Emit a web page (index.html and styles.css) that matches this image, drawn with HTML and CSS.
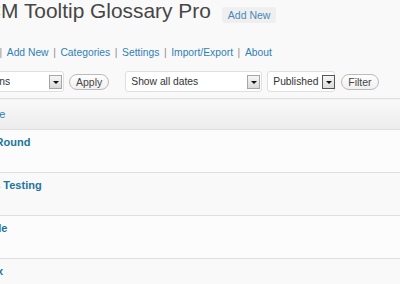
FILE: index.html
```html
<!DOCTYPE html>
<html>
<head>
<meta charset="utf-8">
<link rel="stylesheet" href="styles.css">
</head>
<body>
<div class="wrap">
  <h2 class="page-title"><span>CM Tooltip Glossary Pro</span><a class="add-new" href="#">Add New</a></h2>
  <ul class="subsubsub">
    <li><a href="#">All (4)</a><span class="sep">|</span></li>
    <li><a href="#">Add New</a><span class="sep">|</span></li>
    <li><a href="#">Categories</a><span class="sep">|</span></li>
    <li><a href="#">Settings</a><span class="sep">|</span></li>
    <li><a href="#">Import/Export</a><span class="sep">|</span></li>
    <li><a href="#">About</a></li>
  </ul>
  <div class="tablenav">
    <div class="select bulk"><span>Bulk Actions</span><span class="arrow"></span></div>
    <button class="button apply">Apply</button>
    <div class="select dates"><span>Show all dates</span><span class="arrow"></span></div>
    <div class="select status"><span>Published</span><span class="arrow dark"></span></div>
    <button class="button filter">Filter</button>
  </div>
  <table class="list">
    <thead>
      <tr><th><a href="#">Title</a></th></tr>
    </thead>
    <tbody>
      <tr class="odd"><td><strong><a href="#">A Round</a></strong></td></tr>
      <tr class="even"><td><strong><a href="#">Ms Testing</a></strong></td></tr>
      <tr class="odd"><td><strong><a href="#">Title</a></strong></td></tr>
      <tr class="even"><td><strong><a href="#">Tax</a></strong></td></tr>
    </tbody>
  </table>
</div>
</body>
</html>
```

FILE: styles.css
```css
html, body {
  margin: 0;
  padding: 0;
  background: #f9f9f9;
  overflow: hidden;
}
body {
  font-family: "Liberation Sans", Arial, sans-serif;
  color: #333;
}
a {
  color: #21759b;
  text-decoration: none;
}
.wrap {
  margin-left: -14px;
  width: 440px;
}
.page-title {
  display: flex;
  align-items: flex-start;
  margin: 0;
  font-size: 20.9px;
  font-weight: normal;
  line-height: 22px;
  color: #464646;
  white-space: nowrap;
}
.add-new {
  margin: 7px 0 0 11px;
  padding: 0 6px;
  height: 16px;
  line-height: 16px;
  font-size: 10.5px;
  background: #efefef;
  border-radius: 3px;
  color: #4a88b8;
}
.subsubsub {
  list-style: none;
  display: flex;
  margin: 22px 0 0 -18px;
  padding: 0;
  font-size: 10.3px;
  line-height: 16px;
  color: #8a8a8a;
}
.subsubsub a {
  color: #2f7fb6;
}
.subsubsub .sep {
  margin: 0 4.6px;
}
.tablenav {
  display: flex;
  align-items: center;
  margin-top: 10px;
  height: 21px;
}
.select {
  display: flex;
  align-items: center;
  justify-content: space-between;
  box-sizing: border-box;
  height: 21px;
  border: 1px solid #dfdfdf;
  border-radius: 3px;
  background: #fff;
  font-size: 10.3px;
  color: #333;
  padding: 0 1px 0 5px;
}
.arrow {
  position: relative;
  flex: none;
  box-sizing: border-box;
  width: 13px;
  height: 14px;
  border: 1px solid #a5a5a5;
  background: linear-gradient(#f6f6f6, #dadada);
}
.arrow::after {
  content: "";
  position: absolute;
  left: 3px;
  top: 5px;
  border-left: 3px solid transparent;
  border-right: 3px solid transparent;
  border-top: 3px solid #111;
}
.arrow.dark {
  border-color: #555;
}
.bulk {
  width: 116px;
  margin-left: -38px;
}
.dates {
  width: 137px;
  margin-left: 16px;
}
.status {
  width: 68px;
  margin-left: 5px;
}
.status span:first-child {
  margin-right: 3px;
}
.button {
  box-sizing: border-box;
  height: 16px;
  padding: 0 6px;
  border: 1px solid #bbb;
  border-radius: 9px;
  background: linear-gradient(#fefefe, #f0f0f0);
  font-family: "Liberation Sans", Arial, sans-serif;
  font-size: 10.5px;
  line-height: 14px;
  color: #464646;
}
.apply {
  margin-left: 5px;
}
.filter {
  margin-left: 6px;
}
.list {
  margin: 6px 0 0 -8px;
  width: 470px;
  border-collapse: collapse;
  border-top: 1px solid #dfdfdf;
}
.list th {
  height: 30px;
  padding: 0 7px;
  text-align: left;
  font-weight: normal;
  font-size: 11px;
  line-height: 29px;
  background: linear-gradient(#f9f9f9, #ececec);
  border-bottom: 1px solid #dfdfdf;
}
.list th a {
  color: #2f7fb6;
}
.list td {
  height: 43px;
  box-sizing: border-box;
  padding: 5px 7px 0;
  vertical-align: top;
  font-size: 11px;
  line-height: 15px;
  border-top: 1px solid #fff;
  border-bottom: 1px solid #dfdfdf;
}
.list tr.odd td {
  background: #fcfcfc;
}
.list tr.even td {
  background: #f9f9f9;
}
```
